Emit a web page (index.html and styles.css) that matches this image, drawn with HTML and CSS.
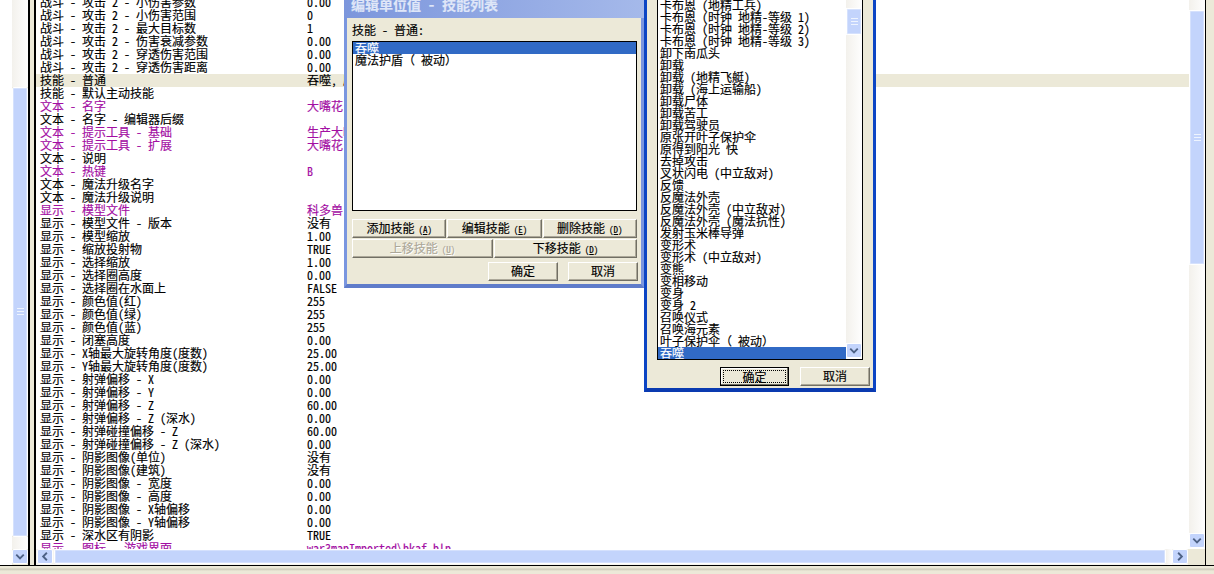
FILE: index.html
```html
<!DOCTYPE html>
<html lang="zh">
<head>
<meta charset="utf-8">
<title>Object Editor</title>
<link rel="stylesheet" href="styles.css">
</head>
<body>
<div class="main">
  <div class="tree">
    <div class="tree-white"></div>
    <div class="vbar">
      <div class="track tree-gap-top"></div>
      <div class="thumb tree-thumb"><svg class="grip" width="7" height="8" viewBox="0 0 7 8"><path d="M0 .5h7M0 3.5h7M0 6.5h7" stroke="#eef4fe" fill="none"/></svg></div>
      <div class="track grow"></div>
      <div class="btn"><svg width="15" height="15" viewBox="0 0 15 15"><path d="M3.5 5.5l4 4 4-4" stroke="#4d6185" stroke-width="2" fill="none"/></svg></div>
    </div>
  </div>
  <div class="splitter"></div>
  <div class="fields">
    <div class="fields-top">
      <div class="list">
        <div class="row"><span>战斗 - 攻击 2 - 小伤害参数</span><span>0.00</span></div>
        <div class="row"><span>战斗 - 攻击 2 - 小伤害范围</span><span>0</span></div>
        <div class="row"><span>战斗 - 攻击 2 - 最大目标数</span><span>1</span></div>
        <div class="row"><span>战斗 - 攻击 2 - 伤害衰减参数</span><span>0.00</span></div>
        <div class="row"><span>战斗 - 攻击 2 - 穿透伤害范围</span><span>0.00</span></div>
        <div class="row"><span>战斗 - 攻击 2 - 穿透伤害距离</span><span>0.00</span></div>
        <div class="row sel"><span>技能 - 普通</span><span>吞噬, 魔法护盾</span></div>
        <div class="row"><span>技能 - 默认主动技能</span><span></span></div>
        <div class="row mod"><span>文本 - 名字</span><span>大嘴花</span></div>
        <div class="row"><span>文本 - 名字 - 编辑器后缀</span><span></span></div>
        <div class="row mod"><span>文本 - 提示工具 - 基础</span><span>生产大嘴花</span></div>
        <div class="row mod"><span>文本 - 提示工具 - 扩展</span><span>大嘴花</span></div>
        <div class="row"><span>文本 - 说明</span><span></span></div>
        <div class="row mod"><span>文本 - 热键</span><span>B</span></div>
        <div class="row"><span>文本 - 魔法升级名字</span><span></span></div>
        <div class="row"><span>文本 - 魔法升级说明</span><span></span></div>
        <div class="row mod"><span>显示 - 模型文件</span><span>科多兽</span></div>
        <div class="row"><span>显示 - 模型文件 - 版本</span><span>没有</span></div>
        <div class="row"><span>显示 - 模型缩放</span><span>1.00</span></div>
        <div class="row"><span>显示 - 缩放投射物</span><span>TRUE</span></div>
        <div class="row"><span>显示 - 选择缩放</span><span>1.00</span></div>
        <div class="row"><span>显示 - 选择圈高度</span><span>0.00</span></div>
        <div class="row"><span>显示 - 选择圈在水面上</span><span>FALSE</span></div>
        <div class="row"><span>显示 - 颜色值(红)</span><span>255</span></div>
        <div class="row"><span>显示 - 颜色值(绿)</span><span>255</span></div>
        <div class="row"><span>显示 - 颜色值(蓝)</span><span>255</span></div>
        <div class="row"><span>显示 - 闭塞高度</span><span>0.00</span></div>
        <div class="row"><span>显示 - X轴最大旋转角度(度数)</span><span>25.00</span></div>
        <div class="row"><span>显示 - Y轴最大旋转角度(度数)</span><span>25.00</span></div>
        <div class="row"><span>显示 - 射弹偏移 - X</span><span>0.00</span></div>
        <div class="row"><span>显示 - 射弹偏移 - Y</span><span>0.00</span></div>
        <div class="row"><span>显示 - 射弹偏移 - Z</span><span>60.00</span></div>
        <div class="row"><span>显示 - 射弹偏移 - Z (深水)</span><span>0.00</span></div>
        <div class="row"><span>显示 - 射弹碰撞偏移 - Z</span><span>60.00</span></div>
        <div class="row"><span>显示 - 射弹碰撞偏移 - Z (深水)</span><span>0.00</span></div>
        <div class="row"><span>显示 - 阴影图像(单位)</span><span>没有</span></div>
        <div class="row"><span>显示 - 阴影图像(建筑)</span><span>没有</span></div>
        <div class="row"><span>显示 - 阴影图像 - 宽度</span><span>0.00</span></div>
        <div class="row"><span>显示 - 阴影图像 - 高度</span><span>0.00</span></div>
        <div class="row"><span>显示 - 阴影图像 - X轴偏移</span><span>0.00</span></div>
        <div class="row"><span>显示 - 阴影图像 - Y轴偏移</span><span>0.00</span></div>
        <div class="row"><span>显示 - 深水区有阴影</span><span>TRUE</span></div>
        <div class="row mod"><span>显示 - 图标 - 游戏界面</span><span>war3mapImported\bkaf.blp</span></div>
      </div>
      <div class="vbar vbar-right">
        <div class="track fields-gap-top"></div>
        <div class="thumb fields-thumb"><svg class="grip" width="7" height="8" viewBox="0 0 7 8"><path d="M0 .5h7M0 3.5h7M0 6.5h7" stroke="#eef4fe" fill="none"/></svg></div>
        <div class="track grow"></div>
        <div class="btn"><svg width="15" height="15" viewBox="0 0 15 15"><path d="M3.5 5.5l4 4 4-4" stroke="#4d6185" stroke-width="2" fill="none"/></svg></div>
      </div>
    </div>
    <div class="hbar">
      <div class="btn"><svg width="15" height="15" viewBox="0 0 15 15"><path d="M9.5 3.5l-4 4 4 4" stroke="#4d6185" stroke-width="2" fill="none"/></svg></div>
      <div class="thumb grow"></div>
      <div class="track hbar-gap"></div>
      <div class="btn"><svg width="15" height="15" viewBox="0 0 15 15"><path d="M5.5 3.5l4 4-4 4" stroke="#4d6185" stroke-width="2" fill="none"/></svg></div>
      <div class="corner"></div>
    </div>
  </div>
</div>
<div class="status"></div>

<section class="dialog dialog-skills">
  <h1 class="title">编辑单位值 - 技能列表</h1>
  <div class="dialog-body">
    <div class="label">技能 - 普通:</div>
    <div class="listbox skills-list">
      <div class="item selected">吞噬</div>
      <div class="item">魔法护盾（ 被动）</div>
    </div>
    <div class="btn-row three">
      <button class="push">添加技能<span class="key">(<u>A</u>)</span></button>
      <button class="push">编辑技能<span class="key">(<u>E</u>)</span></button>
      <button class="push">删除技能<span class="key">(<u>D</u>)</span></button>
    </div>
    <div class="btn-row two">
      <button class="push disabled">上移技能<span class="key">(<u>U</u>)</span></button>
      <button class="push">下移技能<span class="key">(<u>D</u>)</span></button>
    </div>
    <div class="btn-row actions">
      <button class="push wide">确定</button>
      <button class="push wide">取消</button>
    </div>
  </div>
</section>

<section class="dialog dialog-pick">
  <div class="listbox pick-list">
    <div class="items">
      <div class="item">卡布恩 (地精工兵)</div>
      <div class="item">卡布恩 (时钟 地精-等级 1)</div>
      <div class="item">卡布恩 (时钟 地精-等级 2)</div>
      <div class="item">卡布恩 (时钟 地精-等级 3)</div>
      <div class="item">卸下南瓜头</div>
      <div class="item">卸载</div>
      <div class="item">卸载 (地精飞艇)</div>
      <div class="item">卸载 (海上运输船)</div>
      <div class="item">卸载尸体</div>
      <div class="item">卸载苦工</div>
      <div class="item">卸载驾驶员</div>
      <div class="item">原张开叶子保护伞</div>
      <div class="item">原得到阳光 快</div>
      <div class="item">去掉攻击</div>
      <div class="item">叉状闪电 (中立敌对)</div>
      <div class="item">反馈</div>
      <div class="item">反魔法外壳</div>
      <div class="item">反魔法外壳 (中立敌对)</div>
      <div class="item">反魔法外壳 (魔法抗性)</div>
      <div class="item">发射玉米棒导弹</div>
      <div class="item">变形术</div>
      <div class="item">变形术 (中立敌对)</div>
      <div class="item">变熊</div>
      <div class="item">变相移动</div>
      <div class="item">变身</div>
      <div class="item">变身 2</div>
      <div class="item">召唤仪式</div>
      <div class="item">召唤海元素</div>
      <div class="item">叶子保护伞（ 被动）</div>
      <div class="item selected">吞噬</div>
    </div>
    <div class="vbar pick-bar">
      <div class="track pick-gap-top"></div>
      <div class="thumb pick-thumb"><svg class="grip" width="7" height="8" viewBox="0 0 7 8"><path d="M0 .5h7M0 3.5h7M0 6.5h7" stroke="#eef4fe" fill="none"/></svg></div>
      <div class="track grow"></div>
      <div class="btn"><svg width="15" height="15" viewBox="0 0 15 15"><path d="M3.5 5.5l4 4 4-4" stroke="#4d6185" stroke-width="2" fill="none"/></svg></div>
    </div>
  </div>
  <div class="btn-row pick-actions">
    <button class="push wide default"><span class="focus">确定</span></button>
    <button class="push wide">取消</button>
  </div>
</section>
</body>
</html>
```

FILE: styles.css
```css
* { box-sizing: border-box; }

html, body {
  margin: 0;
  height: 574px;
  overflow: hidden;
}

body {
  position: relative;
  background: #ece9d8;
  color: #000;
  font: 12px/13px "Noto Sans Mono CJK SC", "Noto Sans CJK SC", "Liberation Mono", monospace;
  -webkit-text-stroke: 0.15px currentColor;
}

.main {
  display: flex;
  height: 566px;
  border-bottom: 1px solid #000;
}

.tree {
  display: flex;
  width: 30px;
  border-right: 2px solid #000;
}

.tree-white { width: 12px; background: #fff; }

.splitter { width: 4px; }

.fields {
  flex: 1;
  display: flex;
  flex-direction: column;
  min-width: 0;
  margin-right: 8px;
  border-left: 2px solid #000;
  border-right: 1px solid #000;
  background: #fff;
}

.fields-top {
  flex: 1;
  display: flex;
  min-height: 0;
}

.list {
  flex: 1;
  min-width: 0;
  overflow: hidden;
  background: #fff;
}

.row {
  display: grid;
  grid-template-columns: 267px 1fr;
  height: 13px;
  line-height: 11px;
  padding-left: 4px;
  white-space: pre;
}

.row:first-child { margin-top: -4px; }
.row.sel { background: #ece9d8; }
.row.mod { color: #a30ea3; }

/* scrollbars */
.vbar {
  display: flex;
  flex-direction: column;
  width: 16px;
  flex: none;
}

.track {
  background: linear-gradient(90deg, #f3f1ec, #fefefe);
}

.grow { flex: 1; }

.thumb {
  display: flex;
  align-items: center;
  justify-content: center;
  background: #c3d4fc;
  border: 1px solid #fff;
  border-radius: 2px;
  box-shadow: inset 0 0 0 1px #d5e1fd;
}

.grip { display: block; }

.btn {
  width: 16px;
  height: 15px;
  flex: none;
  display: flex;
  align-items: center;
  justify-content: center;
  background: #c3d4fc;
  border: 1px solid #fff;
  border-radius: 2px;
}

.tree-gap-top { height: 87px; }
.tree-thumb { height: 450px; }
.tree .btn { margin-bottom: 1px; }

.fields-gap-top { height: 10px; }
.fields-thumb { height: 255px; }
.vbar-right .btn { margin-bottom: 1px; }

.hbar {
  display: flex;
  height: 16px;
  flex: none;
  background: #f6f5f0;
  padding-left: 1px;
}

.hbar .btn { height: 15px; }
.hbar .thumb { height: 15px; margin-left: 1px; }
.hbar-gap { width: 6px; }
.corner { width: 17px; background: #ece9d8; }

.status {
  height: 8px;
  background: linear-gradient(180deg, #ece9d8 0, #ece9d8 2px, #c9c6b6 3px, #ece9d8 5px);
}

/* windows */
.dialog {
  position: absolute;
  display: flex;
  flex-direction: column;
  background: #ece9d8;
}

.dialog-skills {
  left: 344px;
  top: -4px;
  width: 300px;
  height: 292px;
  border: solid #7a96df;
  border-width: 0 3px 4px;
  border-bottom-color: #5f7cca;
}

.title {
  margin: 0 -3px;
  height: 22px;
  padding: 1px 0 0 7px;
  font-size: 14px;
  line-height: 14px;
  font-weight: 700;
  color: #dfe6f8;
  background: linear-gradient(90deg, #7c96dc, #a5b9ea);
  white-space: pre;
}

.dialog-body {
  flex: 1;
  display: flex;
  flex-direction: column;
  padding: 6px 4px 0 5px;
}

.label {
  height: 17px;
  line-height: 12px;
  white-space: pre;
}

.listbox {
  border: 1px solid #000;
  background: #fff;
  overflow: hidden;
}

.skills-list {
  height: 170px;
}

.item {
  height: 12px;
  line-height: 12px;
  padding-left: 2px;
  white-space: pre;
}

.selected {
  background: #316ac5;
  color: #fff;
}

.btn-row { display: flex; }

.three {
  margin-top: 8px;
  gap: 1px;
  height: 20px;
}

.three .push { flex: 1; }

.two {
  height: 20px;
  gap: 1px;
}

.two .push { flex: 1; }
.two .push:first-child { flex: none; width: 141px; }

.actions {
  justify-content: flex-end;
  gap: 10px;
  margin-top: 3px;
  margin-right: -1px;
}

.push {
  height: 19px;
  padding: 0 0 2px;
  margin: 0;
  background: #ece9d8;
  border: 1px solid;
  border-color: #fff #716f64 #716f64 #fff;
  box-shadow: inset -1px -1px 0 #aca899;
  font: inherit;
  line-height: 15px;
  color: #000;
  white-space: pre;
}

.key {
  font-size: 9px;
  margin-left: 4px;
}

.wide { width: 70px; }

.disabled { color: #aca899; text-shadow: 1px 1px 0 #fff; }

.default {
  padding: 0;
  border: 1px solid #000;
  box-shadow: inset -1px -1px 0 #716f64, inset 1px 1px 0 #fff;
}

.focus {
  display: block;
  margin: 2px;
  border: 1px dotted #000;
  line-height: 11px;
}

.dialog-pick {
  left: 644px;
  top: -10px;
  width: 232px;
  height: 402px;
  border: solid #0c45c4;
  border-width: 0 3px 4px;
  border-bottom-color: #0a3ab0;
  padding: 0 10px 0 10px;
}

.pick-list {
  display: flex;
  flex: none;
  height: 370px;
  border-width: 0 1px 1px;
}

.items {
  flex: 1;
  min-width: 0;
  display: flex;
  flex-direction: column;
  justify-content: flex-end;
}

.pick-bar { width: 16px; }
.pick-gap-top { height: 18px; }
.pick-thumb { height: 27px; }
.pick-bar .btn { margin-bottom: 1px; }

.pick-actions {
  justify-content: flex-end;
  gap: 11px;
  margin-top: 7px;
  margin-right: -7px;
}

.pick-actions .default { width: 69px; }
```
